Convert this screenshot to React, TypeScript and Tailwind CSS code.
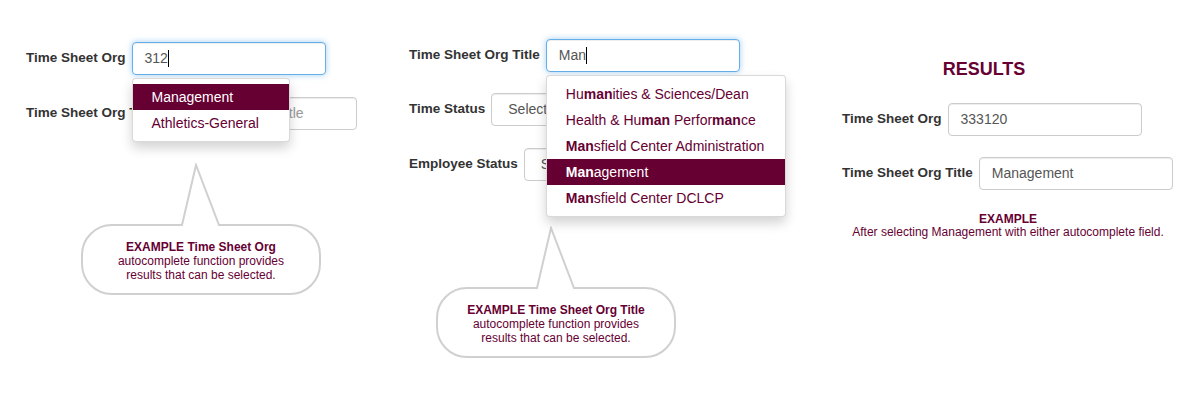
import React from "react";

const maroon = "text-[#660033]";

// bold every case-insensitive match of the query, like the autocomplete does
function highlight(text: string, query: string) {
  const re = new RegExp(`(${query})`, "ig");
  return text.split(re).map((part, i) =>
    part.toLowerCase() === query.toLowerCase() ? (
      <b key={i} className="font-bold">
        {part}
      </b>
    ) : (
      <span key={i}>{part}</span>
    )
  );
}

function Label({ children }: { children: React.ReactNode }) {
  return <label className="text-[13.5px] font-bold text-[#333] mr-[6px] whitespace-nowrap">{children}</label>;
}

function Field({
  value,
  placeholder,
  focused,
  select,
  caret,
}: {
  value?: string;
  placeholder?: string;
  focused?: boolean;
  select?: boolean;
  caret?: boolean;
}) {
  return (
    <div
      className={`w-[194px] h-[33px] flex items-center rounded-[4px] border bg-white text-[14px] ${
        select ? "pl-[16px]" : "pl-[12px]"
      } ${
        focused
          ? "border-[#66afe9] shadow-[inset_0_1px_1px_rgba(0,0,0,0.075),0_0_6px_rgba(102,175,233,0.6)]"
          : "border-[#ccc] shadow-[inset_0_1px_1px_rgba(0,0,0,0.075)]"
      }`}
    >
      {value ? (
        <span className="text-[#555]">{value}</span>
      ) : (
        <span className="text-[#999]">{placeholder}</span>
      )}
      {caret && <span className="inline-block w-px h-[17px] bg-black" />}
    </div>
  );
}

function Menu({
  items,
  query,
  active,
  width,
}: {
  items: string[];
  query: string;
  active: string;
  width: string;
}) {
  return (
    <ul
      className={`absolute left-0 top-[36px] z-10 ${width} bg-white border border-[rgba(0,0,0,0.15)] rounded-[4px] shadow-[0_6px_12px_rgba(0,0,0,0.175)] py-[5px]`}
    >
      {items.map((item) => (
        <li
          key={item}
          className={`h-[26px] leading-[26px] px-[19px] text-[14px] whitespace-nowrap ${
            item === active ? "bg-[#660033] text-white" : maroon
          }`}
        >
          {highlight(item, query)}
        </li>
      ))}
    </ul>
  );
}

function Bubble({ title }: { title: string }) {
  return (
    <div className="relative w-[242px] h-[133px]">
      <svg className="absolute inset-0" width="242" height="133" viewBox="0 0 242 133" fill="none">
        <path
          d="M102 62 L116 2 L139 62 L210 62 A30 30 0 0 1 240 92 L240 101 A30 30 0 0 1 210 131 L32 131 A30 30 0 0 1 2 101 L2 92 A30 30 0 0 1 32 62 Z"
          stroke="#d0d0d0"
          strokeWidth="2"
          fill="#fff"
        />
      </svg>
      <div className={`absolute left-0 right-0 top-[62px] bottom-0 flex flex-col items-center justify-center text-center text-[12px] leading-[14px] ${maroon}`}>
        <b className="font-bold">{title}</b>
        <span>autocomplete function provides</span>
        <span>results that can be selected.</span>
      </div>
    </div>
  );
}

export default function App() {
  return (
    <div className="w-[1200px] h-[400px] bg-white flex font-['Liberation_Sans',Arial,sans-serif] overflow-hidden">
      {/* Time Sheet Org example */}
      <div className="w-[383px] shrink-0 pl-[26px] pt-[42px]">
        <div className="flex items-center">
          <Label>Time Sheet Org</Label>
          <div className="relative">
            <Field value="312" focused caret />
            <Menu
              items={["Management", "Athletics-General"]}
              query="@@"
              active="Management"
              width="w-[158px]"
            />
          </div>
        </div>
        <div className="flex items-center mt-[22px]">
          <Label>Time Sheet Org Title</Label>
          <Field placeholder="Time Sheet Org Title" />
        </div>
        <div className="ml-[54px] mt-[33px]">
          <Bubble title="EXAMPLE Time Sheet Org" />
        </div>
      </div>

      {/* Time Sheet Org Title example */}
      <div className="w-[433px] shrink-0 pl-[26px] pt-[39px]">
        <div className="flex items-center">
          <Label>Time Sheet Org Title</Label>
          <div className="relative">
            <Field value="Man" focused caret />
            <Menu
              items={[
                "Humanities & Sciences/Dean",
                "Health & Human Performance",
                "Mansfield Center Administration",
                "Management",
                "Mansfield Center DCLCP",
              ]}
              query="man"
              active="Management"
              width="w-[240px]"
            />
          </div>
        </div>
        <div className="flex items-center mt-[21px]">
          <Label>Time Status</Label>
          <Field value="Select" select />
        </div>
        <div className="flex items-center mt-[22px]">
          <Label>Employee Status</Label>
          <Field value="Select" select />
        </div>
        <div className="ml-[26px] mt-[45px]">
          <Bubble title="EXAMPLE Time Sheet Org Title" />
        </div>
      </div>

      {/* Results */}
      <div className="flex-1 pl-[26px] pt-[57px]">
        <h2 className={`w-[284px] text-center text-[18px] leading-[24px] font-bold ${maroon}`}>RESULTS</h2>
        <div className="flex items-center mt-[22px]">
          <Label>Time Sheet Org</Label>
          <Field value="333120" />
        </div>
        <div className="flex items-center mt-[21px]">
          <Label>Time Sheet Org Title</Label>
          <Field value="Management" />
        </div>
        <div className={`w-[332px] mt-[23px] text-center text-[12px] leading-[13px] ${maroon}`}>
          <b className="font-bold block">EXAMPLE</b>
          <span>After selecting Management with either autocomplete field.</span>
        </div>
      </div>
    </div>
  );
}
